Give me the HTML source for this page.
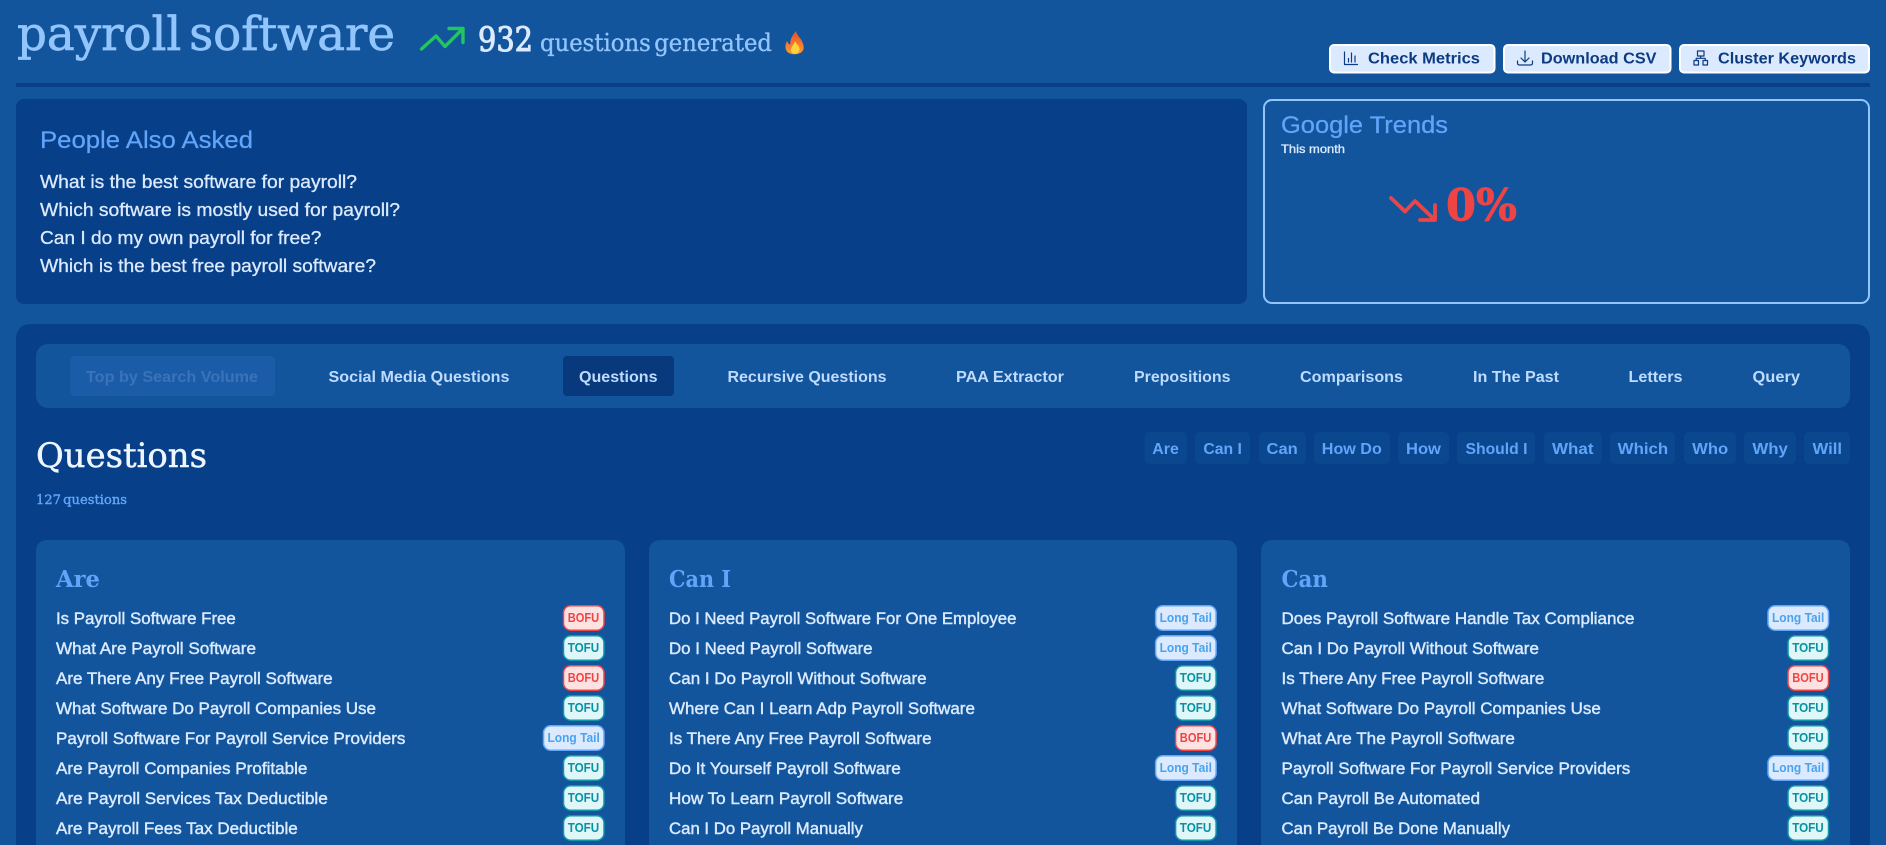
<!DOCTYPE html>
<html lang="en"><head><meta charset="utf-8"><title>payroll software</title>
<style>
html,body{margin:0;padding:0;background:#12559d;width:1886px;height:845px;overflow:hidden}
svg{display:block}
text{white-space:pre}
.s{font-family:"DejaVu Serif","Liberation Serif",serif}
.i{font-family:"Liberation Sans",sans-serif}
.r{font-family:"Liberation Sans",sans-serif;font-size:16.5px;fill:#dbeafe;stroke:#dbeafe;stroke-width:.42px}
.n{font-family:"Liberation Sans",sans-serif;font-size:15.5px;font-weight:700;fill:#bfdbfe}
.p{font-family:"Liberation Sans",sans-serif;font-size:15.5px;font-weight:700;fill:#60a5fa}
.q{font-family:"Liberation Sans",sans-serif;font-size:18px;fill:#dbeafe;stroke:#dbeafe;stroke-width:.3px}
.bt{font-family:"Liberation Sans",sans-serif;font-size:15.5px;font-weight:700;fill:#0c3b82}
.h{font-family:"DejaVu Serif","Liberation Serif",serif;font-size:23px;font-weight:700;fill:#60a5fa}
.T rect{fill:#e0f7fa;stroke:#0e97a8;stroke-width:1.5;x:-41px;width:40.5px}
.T text{fill:#0891a2}
.B rect{fill:#fee2e2;stroke:#ef4444;stroke-width:1.5;x:-41px;width:40.5px}
.B text{fill:#ef4444}
.L rect{fill:#dbeafe;stroke:#60a5fa;stroke-width:1.5;x:-61px;width:60.5px}
.L text{fill:#4aa3ec}
.T text,.B text,.L text{font-family:"Liberation Sans",sans-serif;font-size:12.5px;font-weight:700}
.ic{fill:none;stroke:#0c3b82;stroke-width:1.2;stroke-linecap:round;stroke-linejoin:round}
</style></head><body>
<svg width="1886" height="845" viewBox="0 0 1886 845" xmlns="http://www.w3.org/2000/svg">
<defs>
<linearGradient id="fl" x1="0" y1="0" x2="0" y2="1"><stop offset="0" stop-color="#e4502c"/><stop offset="1" stop-color="#ff9a2e"/></linearGradient>
</defs>
<rect width="1886" height="845" fill="#12559d"/>

<!-- header -->
<text class="s" x="17" y="50" font-size="47" fill="#93c5fd" stroke="#93c5fd" stroke-width=".7" style="word-spacing:-7px" textLength="378" lengthAdjust="spacingAndGlyphs">payroll software</text>
<path d="M421.5 49 L436 36 L445 46.5 L463 28.5 M449 28.5 H463 V42.5" fill="none" stroke="#22c55e" stroke-width="3.4" stroke-linecap="round" stroke-linejoin="round"/>
<text class="s" x="478" y="51" font-size="34" font-weight="400" fill="#dbeafe" stroke="#dbeafe" stroke-width="1.1" textLength="55" lengthAdjust="spacingAndGlyphs">932</text>
<text class="s" x="540" y="51" font-size="24" fill="#93c5fd" stroke="#93c5fd" stroke-width=".35" style="word-spacing:-4px" textLength="232" lengthAdjust="spacingAndGlyphs">questions generated</text>
<path d="M796 31 C797 36 801 38 802.500 42.500 C804.500 47 804 50.500 801 52.500 C798 54.800 791 54.800 788 52.500 C784.500 49.500 785 44.500 787 41 C788 43 789 44.500 790.500 44.500 C789.500 40 792.500 35 796 31 Z" fill="url(#fl)"/>
<path d="M795 41 C796 44 799.500 45.500 799.500 49 C799.500 52 797.500 53.800 795 53.800 C792.300 53.800 790.500 51.800 791 49 C791.500 46 794.300 45 795 41 Z" fill="#ffd23f"/>

<!-- buttons -->
<rect x="1330" y="45" width="164.500" height="27.500" rx="4" fill="#dbeafe" stroke="#fff" stroke-width="2"/>
<rect x="1504" y="45" width="166.500" height="27.500" rx="4" fill="#dbeafe" stroke="#fff" stroke-width="2"/>
<rect x="1680" y="45" width="189" height="27.500" rx="4" fill="#dbeafe" stroke="#fff" stroke-width="2"/>
<path class="ic" d="M1344.500 52 V64.500 H1357.500 M1348.500 58.500 V62 M1351.500 53 V62 M1355 56 V62"/>
<path class="ic" d="M1525 51 V62 M1521 58 L1525 62 L1529 58 M1517.500 61 V63 Q1517.500 65 1519.500 65 H1530.500 Q1532.500 65 1532.500 63 V61"/>
<path class="ic" d="M1697.500 51 H1704 V56 H1697.500 Z M1694 60.500 H1698.500 V65 H1694 Z M1703 60.500 H1707.500 V65 H1703 Z M1700.700 56 V58.300 M1696.200 60.500 V58.300 H1705.200 V60.500"/>
<text class="bt" x="1368" y="63.500" textLength="112" lengthAdjust="spacingAndGlyphs">Check Metrics</text>
<text class="bt" x="1541" y="63.500" textLength="115.500" lengthAdjust="spacingAndGlyphs">Download CSV</text>
<text class="bt" x="1718" y="63.500" textLength="138" lengthAdjust="spacingAndGlyphs">Cluster Keywords</text>

<rect x="16" y="83" width="1854" height="4" fill="#073f88"/>

<!-- PAA -->
<rect x="16" y="99" width="1231" height="205" rx="8" fill="#073f88"/>
<text class="i" x="40" y="148" font-size="24" fill="#60a5fa" stroke="#60a5fa" stroke-width=".25" textLength="213" lengthAdjust="spacingAndGlyphs">People Also Asked</text>
<text class="q" x="40" y="188" textLength="317" lengthAdjust="spacingAndGlyphs">What is the best software for payroll?</text>
<text class="q" x="40" y="216" textLength="360" lengthAdjust="spacingAndGlyphs">Which software is mostly used for payroll?</text>
<text class="q" x="40" y="244" textLength="281.400" lengthAdjust="spacingAndGlyphs">Can I do my own payroll for free?</text>
<text class="q" x="40" y="272" textLength="336" lengthAdjust="spacingAndGlyphs">Which is the best free payroll software?</text>

<!-- Trends -->
<rect x="1264" y="100" width="605" height="203" rx="8" fill="#12559d" stroke="#93c5fd" stroke-width="2"/>
<text class="i" x="1281" y="133" font-size="24" fill="#60a5fa" stroke="#60a5fa" stroke-width=".25" textLength="167" lengthAdjust="spacingAndGlyphs">Google Trends</text>
<text class="i" x="1281" y="153" font-size="12" fill="#dbeafe" stroke="#dbeafe" stroke-width=".35" textLength="64" lengthAdjust="spacingAndGlyphs">This month</text>
<path d="M1391 198 L1405 211.500 L1415 201 L1435 220 M1420 220 H1435 V205" fill="none" stroke="#ef4444" stroke-width="3.800" stroke-linecap="round" stroke-linejoin="round"/>
<text class="s" x="1446" y="220.500" font-size="44" font-weight="700" fill="#ef4444" stroke="#ef4444" stroke-width=".8" textLength="71" lengthAdjust="spacingAndGlyphs">0%</text>

<!-- Main panel -->
<path d="M16 845 V340 Q16 324 32 324 H1854 Q1870 324 1870 340 V845 Z" fill="#073f88"/>
<rect x="36" y="344" width="1814" height="64" rx="12" fill="#12559d"/>
<rect x="70" y="356" width="205" height="40" rx="4" fill="#1b5ca8"/>
<rect x="563" y="356" width="111" height="40" rx="4" fill="#07397c"/>
<text class="n" x="86" y="382" style="fill:#3a73b9" textLength="172" lengthAdjust="spacingAndGlyphs">Top by Search Volume</text>
<text class="n" x="328.500" y="382" textLength="181" lengthAdjust="spacingAndGlyphs">Social Media Questions</text>
<text class="n" x="579" y="382" textLength="78.500" lengthAdjust="spacingAndGlyphs">Questions</text>
<text class="n" x="727.500" y="382" textLength="159" lengthAdjust="spacingAndGlyphs">Recursive Questions</text>
<text class="n" x="956" y="382" textLength="108" lengthAdjust="spacingAndGlyphs">PAA Extractor</text>
<text class="n" x="1134" y="382" textLength="96.500" lengthAdjust="spacingAndGlyphs">Prepositions</text>
<text class="n" x="1300" y="382" textLength="103" lengthAdjust="spacingAndGlyphs">Comparisons</text>
<text class="n" x="1473" y="382" textLength="86" lengthAdjust="spacingAndGlyphs">In The Past</text>
<text class="n" x="1628.500" y="382" textLength="54" lengthAdjust="spacingAndGlyphs">Letters</text>
<text class="n" x="1752.500" y="382" textLength="47.500" lengthAdjust="spacingAndGlyphs">Query</text>

<text class="s" x="36" y="467" font-size="34" fill="#eff6ff" stroke="#eff6ff" stroke-width=".45" textLength="171" lengthAdjust="spacingAndGlyphs">Questions</text>
<text class="s" x="36" y="504" font-size="13" font-weight="400" fill="#60a5fa" stroke="#60a5fa" stroke-width=".4" style="word-spacing:-2px" textLength="91" lengthAdjust="spacingAndGlyphs">127 questions</text>

<!-- pills -->
<g fill="#0b478f">
<rect x="1144.500" y="432" width="42" height="32" rx="5"/>
<rect x="1195" y="432" width="55" height="32" rx="5"/>
<rect x="1259" y="432" width="47" height="32" rx="5"/>
<rect x="1314" y="432" width="76" height="32" rx="5"/>
<rect x="1398" y="432" width="51" height="32" rx="5"/>
<rect x="1457" y="432" width="78" height="32" rx="5"/>
<rect x="1544" y="432" width="58" height="32" rx="5"/>
<rect x="1610" y="432" width="65" height="32" rx="5"/>
<rect x="1684" y="432" width="52" height="32" rx="5"/>
<rect x="1744" y="432" width="52" height="32" rx="5"/>
<rect x="1804" y="432" width="46" height="32" rx="5"/>
</g>
<text class="p" x="1152.300" y="454" textLength="26.500" lengthAdjust="spacingAndGlyphs">Are</text>
<text class="p" x="1203.400" y="454" textLength="38.500" lengthAdjust="spacingAndGlyphs">Can I</text>
<text class="p" x="1266.500" y="454" textLength="31.300" lengthAdjust="spacingAndGlyphs">Can</text>
<text class="p" x="1321.800" y="454" textLength="60" lengthAdjust="spacingAndGlyphs">How Do</text>
<text class="p" x="1406" y="454" textLength="34.900" lengthAdjust="spacingAndGlyphs">How</text>
<text class="p" x="1465.500" y="454" textLength="62" lengthAdjust="spacingAndGlyphs">Should I</text>
<text class="p" x="1552" y="454" textLength="41.500" lengthAdjust="spacingAndGlyphs">What</text>
<text class="p" x="1617.700" y="454" textLength="50.500" lengthAdjust="spacingAndGlyphs">Which</text>
<text class="p" x="1692.200" y="454" textLength="36" lengthAdjust="spacingAndGlyphs">Who</text>
<text class="p" x="1752.400" y="454" textLength="35.500" lengthAdjust="spacingAndGlyphs">Why</text>
<text class="p" x="1812.500" y="454" textLength="29.500" lengthAdjust="spacingAndGlyphs">Will</text>

<!-- cards -->
<path d="M36 845 V552 Q36 540 48 540 H613 Q625 540 625 552 V845 Z" fill="#12559d"/>
<path d="M649 845 V552 Q649 540 661 540 H1225 Q1237 540 1237 552 V845 Z" fill="#12559d"/>
<path d="M1261 845 V552 Q1261 540 1273 540 H1838 Q1850 540 1850 552 V845 Z" fill="#12559d"/>
<text class="h" x="56" y="587" textLength="44" lengthAdjust="spacingAndGlyphs">Are</text>
<text class="h" x="669" y="587" textLength="62" lengthAdjust="spacingAndGlyphs">Can I</text>
<text class="h" x="1281.500" y="587" textLength="46.500" lengthAdjust="spacingAndGlyphs">Can</text>

<!-- card 1 -->
<text class="r" x="56" y="624" textLength="179.800" lengthAdjust="spacingAndGlyphs">Is Payroll Software Free</text>
<text class="r" x="56" y="654" textLength="200" lengthAdjust="spacingAndGlyphs">What Are Payroll Software</text>
<text class="r" x="56" y="684" textLength="276.600" lengthAdjust="spacingAndGlyphs">Are There Any Free Payroll Software</text>
<text class="r" x="56" y="714" textLength="320" lengthAdjust="spacingAndGlyphs">What Software Do Payroll Companies Use</text>
<text class="r" x="56" y="744" textLength="349.400" lengthAdjust="spacingAndGlyphs">Payroll Software For Payroll Service Providers</text>
<text class="r" x="56" y="774" textLength="251.400" lengthAdjust="spacingAndGlyphs">Are Payroll Companies Profitable</text>
<text class="r" x="56" y="804" textLength="271.800" lengthAdjust="spacingAndGlyphs">Are Payroll Services Tax Deductible</text>
<text class="r" x="56" y="834" textLength="241.700" lengthAdjust="spacingAndGlyphs">Are Payroll Fees Tax Deductible</text>
<g class="B" transform="translate(604.500,605)"><rect y=".8" height="24.400" rx="7"/><text x="-36.800" y="17" textLength="31.500" lengthAdjust="spacingAndGlyphs">BOFU</text></g>
<g class="T" transform="translate(604.500,635)"><rect y=".8" height="24.400" rx="7"/><text x="-36.800" y="17" textLength="31.500" lengthAdjust="spacingAndGlyphs">TOFU</text></g>
<g class="B" transform="translate(604.500,665)"><rect y=".8" height="24.400" rx="7"/><text x="-36.800" y="17" textLength="31.500" lengthAdjust="spacingAndGlyphs">BOFU</text></g>
<g class="T" transform="translate(604.500,695)"><rect y=".8" height="24.400" rx="7"/><text x="-36.800" y="17" textLength="31.500" lengthAdjust="spacingAndGlyphs">TOFU</text></g>
<g class="L" transform="translate(604.500,725)"><rect y=".8" height="24.400" rx="7"/><text x="-57" y="17" textLength="52.300" lengthAdjust="spacingAndGlyphs">Long Tail</text></g>
<g class="T" transform="translate(604.500,755)"><rect y=".8" height="24.400" rx="7"/><text x="-36.800" y="17" textLength="31.500" lengthAdjust="spacingAndGlyphs">TOFU</text></g>
<g class="T" transform="translate(604.500,785)"><rect y=".8" height="24.400" rx="7"/><text x="-36.800" y="17" textLength="31.500" lengthAdjust="spacingAndGlyphs">TOFU</text></g>
<g class="T" transform="translate(604.500,815)"><rect y=".8" height="24.400" rx="7"/><text x="-36.800" y="17" textLength="31.500" lengthAdjust="spacingAndGlyphs">TOFU</text></g>

<!-- card 2 -->
<text class="r" x="669" y="624" textLength="347.400" lengthAdjust="spacingAndGlyphs">Do I Need Payroll Software For One Employee</text>
<text class="r" x="669" y="654" textLength="203.500" lengthAdjust="spacingAndGlyphs">Do I Need Payroll Software</text>
<text class="r" x="669" y="684" textLength="257.600" lengthAdjust="spacingAndGlyphs">Can I Do Payroll Without Software</text>
<text class="r" x="669" y="714" textLength="305.900" lengthAdjust="spacingAndGlyphs">Where Can I Learn Adp Payroll Software</text>
<text class="r" x="669" y="744" textLength="262.500" lengthAdjust="spacingAndGlyphs">Is There Any Free Payroll Software</text>
<text class="r" x="669" y="774" textLength="231.800" lengthAdjust="spacingAndGlyphs">Do It Yourself Payroll Software</text>
<text class="r" x="669" y="804" textLength="234.200" lengthAdjust="spacingAndGlyphs">How To Learn Payroll Software</text>
<text class="r" x="669" y="834" textLength="193.900" lengthAdjust="spacingAndGlyphs">Can I Do Payroll Manually</text>
<g class="L" transform="translate(1216.600,605)"><rect y=".8" height="24.400" rx="7"/><text x="-57" y="17" textLength="52.300" lengthAdjust="spacingAndGlyphs">Long Tail</text></g>
<g class="L" transform="translate(1216.600,635)"><rect y=".8" height="24.400" rx="7"/><text x="-57" y="17" textLength="52.300" lengthAdjust="spacingAndGlyphs">Long Tail</text></g>
<g class="T" transform="translate(1216.600,665)"><rect y=".8" height="24.400" rx="7"/><text x="-36.800" y="17" textLength="31.500" lengthAdjust="spacingAndGlyphs">TOFU</text></g>
<g class="T" transform="translate(1216.600,695)"><rect y=".8" height="24.400" rx="7"/><text x="-36.800" y="17" textLength="31.500" lengthAdjust="spacingAndGlyphs">TOFU</text></g>
<g class="B" transform="translate(1216.600,725)"><rect y=".8" height="24.400" rx="7"/><text x="-36.800" y="17" textLength="31.500" lengthAdjust="spacingAndGlyphs">BOFU</text></g>
<g class="L" transform="translate(1216.600,755)"><rect y=".8" height="24.400" rx="7"/><text x="-57" y="17" textLength="52.300" lengthAdjust="spacingAndGlyphs">Long Tail</text></g>
<g class="T" transform="translate(1216.600,785)"><rect y=".8" height="24.400" rx="7"/><text x="-36.800" y="17" textLength="31.500" lengthAdjust="spacingAndGlyphs">TOFU</text></g>
<g class="T" transform="translate(1216.600,815)"><rect y=".8" height="24.400" rx="7"/><text x="-36.800" y="17" textLength="31.500" lengthAdjust="spacingAndGlyphs">TOFU</text></g>

<!-- card 3 -->
<text class="r" x="1281.500" y="624" textLength="353" lengthAdjust="spacingAndGlyphs">Does Payroll Software Handle Tax Compliance</text>
<text class="r" x="1281.500" y="654" textLength="257.400" lengthAdjust="spacingAndGlyphs">Can I Do Payroll Without Software</text>
<text class="r" x="1281.500" y="684" textLength="262.800" lengthAdjust="spacingAndGlyphs">Is There Any Free Payroll Software</text>
<text class="r" x="1281.500" y="714" textLength="319.300" lengthAdjust="spacingAndGlyphs">What Software Do Payroll Companies Use</text>
<text class="r" x="1281.500" y="744" textLength="233.400" lengthAdjust="spacingAndGlyphs">What Are The Payroll Software</text>
<text class="r" x="1281.500" y="774" textLength="348.800" lengthAdjust="spacingAndGlyphs">Payroll Software For Payroll Service Providers</text>
<text class="r" x="1281.500" y="804" textLength="198.500" lengthAdjust="spacingAndGlyphs">Can Payroll Be Automated</text>
<text class="r" x="1281.500" y="834" textLength="228.500" lengthAdjust="spacingAndGlyphs">Can Payroll Be Done Manually</text>
<g class="L" transform="translate(1829,605)"><rect y=".8" height="24.400" rx="7"/><text x="-57" y="17" textLength="52.300" lengthAdjust="spacingAndGlyphs">Long Tail</text></g>
<g class="T" transform="translate(1829,635)"><rect y=".8" height="24.400" rx="7"/><text x="-36.800" y="17" textLength="31.500" lengthAdjust="spacingAndGlyphs">TOFU</text></g>
<g class="B" transform="translate(1829,665)"><rect y=".8" height="24.400" rx="7"/><text x="-36.800" y="17" textLength="31.500" lengthAdjust="spacingAndGlyphs">BOFU</text></g>
<g class="T" transform="translate(1829,695)"><rect y=".8" height="24.400" rx="7"/><text x="-36.800" y="17" textLength="31.500" lengthAdjust="spacingAndGlyphs">TOFU</text></g>
<g class="T" transform="translate(1829,725)"><rect y=".8" height="24.400" rx="7"/><text x="-36.800" y="17" textLength="31.500" lengthAdjust="spacingAndGlyphs">TOFU</text></g>
<g class="L" transform="translate(1829,755)"><rect y=".8" height="24.400" rx="7"/><text x="-57" y="17" textLength="52.300" lengthAdjust="spacingAndGlyphs">Long Tail</text></g>
<g class="T" transform="translate(1829,785)"><rect y=".8" height="24.400" rx="7"/><text x="-36.800" y="17" textLength="31.500" lengthAdjust="spacingAndGlyphs">TOFU</text></g>
<g class="T" transform="translate(1829,815)"><rect y=".8" height="24.400" rx="7"/><text x="-36.800" y="17" textLength="31.500" lengthAdjust="spacingAndGlyphs">TOFU</text></g>
</svg>
</body></html>
